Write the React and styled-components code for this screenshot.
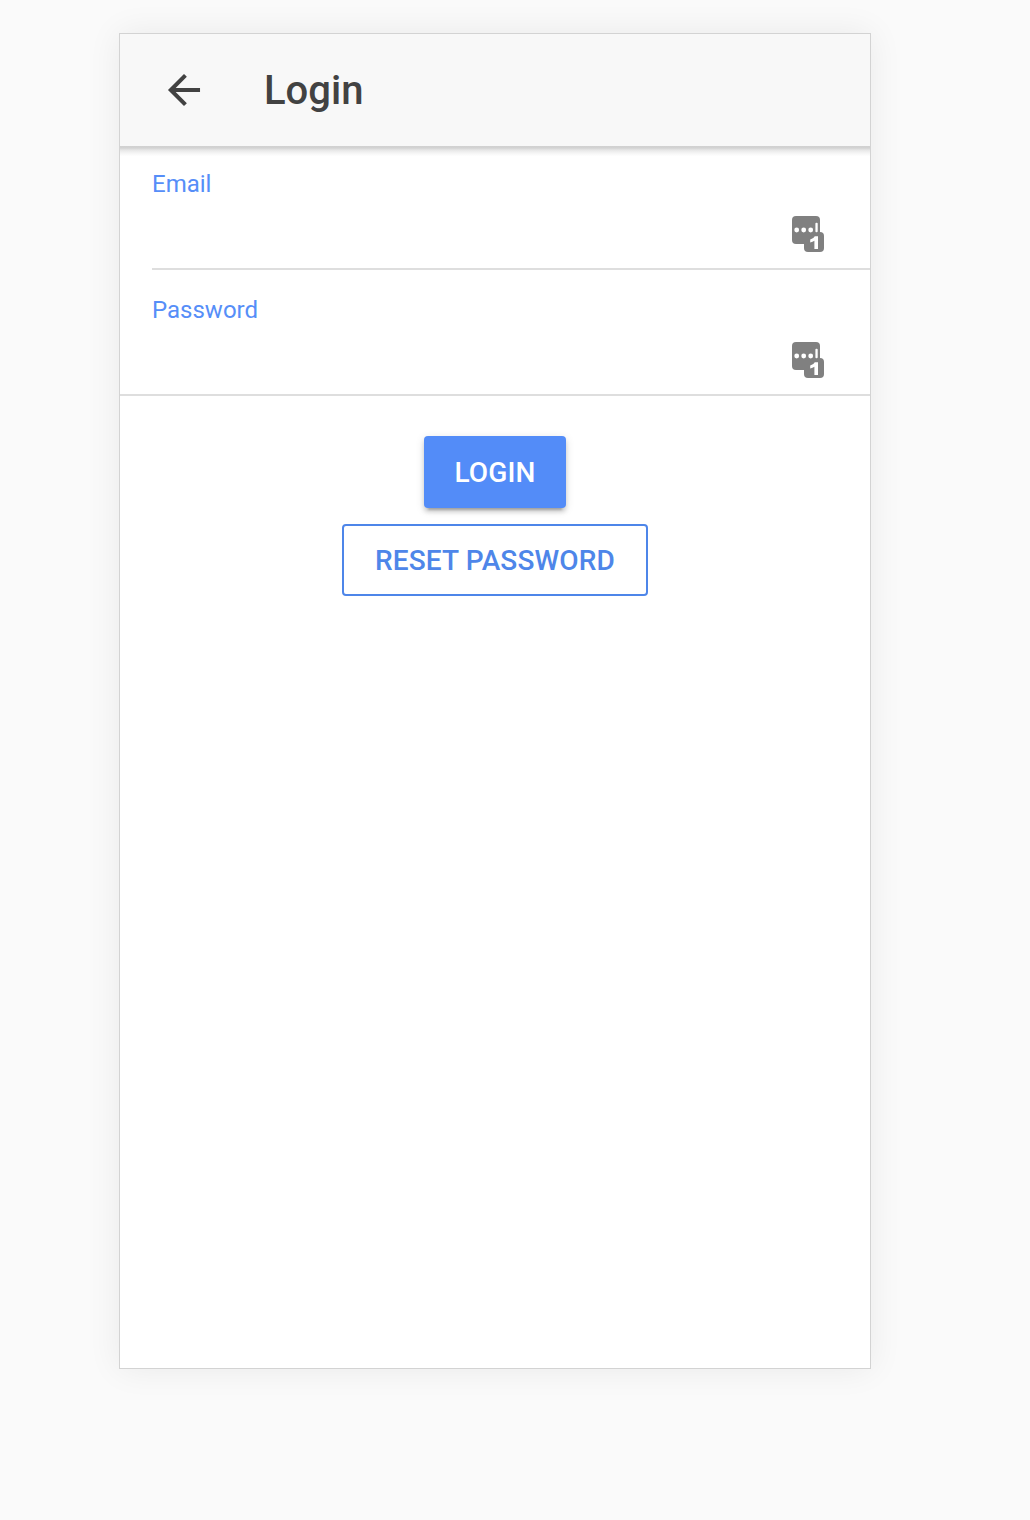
import React from "react";
import styled, { createGlobalStyle } from "styled-components";

const GlobalStyle = createGlobalStyle`
  * { box-sizing: border-box; }
  body {
    margin: 0;
    background: #fafafa;
    font-family: Roboto, "Liberation Sans", sans-serif;
  }
`;

const Page = styled.main`
  min-height: 1520px;
  padding: 33px 0 0 119px;
`;

const Device = styled.div`
  width: 752px;
  height: 1336px;
  background: #fff;
  border: 1px solid #d3d3d3;
  box-shadow: 0 0 32px rgba(0, 0, 0, 0.07);
`;

const Toolbar = styled.header`
  display: flex;
  align-items: center;
  height: 112px;
  padding-left: 40px;
  background: #f8f8f8;
  color: #424242;
`;

const BackButton = styled.button`
  display: flex;
  padding: 0;
  border: 0;
  background: none;
  color: inherit;
`;

const Title = styled.h1`
  margin: 0 0 0 56px;
  padding-top: 2px;
  font-size: 40px;
  line-height: 48px;
  font-weight: 500;
`;

const ToolbarShadow = styled.div`
  height: 10px;
  background: linear-gradient(
    #d1d1d1 0, #d3d3d3 2px, #dddddd 3px, #e6e6e6 4px,
    #f0f0f0 6px, #f8f8f8 8px, #fefefe 10px
  );
`;

const Form = styled.form`
  display: flex;
  flex-direction: column;
`;

const Field = styled.div`
  display: flex;
  justify-content: space-between;
  height: ${(p) => (p.$first ? 114 : 126)}px;
  margin-left: ${(p) => (p.$inset ? 32 : 0)}px;
  padding: ${(p) => (p.$first ? 14 : 26)}px 46px 0 ${(p) => (p.$inset ? 0 : 32)}px;
  border-bottom: 2px solid #dedede;
`;

const Label = styled.label`
  color: #568ef8;
  font-size: 24px;
  line-height: 28px;
`;

const FieldIcon = styled.svg`
  width: 32px;
  height: 36px;
  margin-top: 46px;
`;

const Actions = styled.div`
  display: flex;
  flex-direction: column;
  align-items: center;
  gap: 16px;
  padding-top: 40px;
`;

const Button = styled.button`
  width: ${(p) => p.$width}px;
  height: 72px;
  padding: 2px 0 0;
  border: ${(p) => (p.$outline ? "2px solid #4e86e9" : "0")};
  border-radius: 4px;
  background: ${(p) => (p.$outline ? "transparent" : "#538cf8")};
  color: ${(p) => (p.$outline ? "#4e86e9" : "#fff")};
  box-shadow: ${(p) =>
    p.$outline
      ? "none"
      : "0 4px 4px 0 rgba(0,0,0,.14), 0 6px 2px -4px rgba(0,0,0,.2), 0 2px 10px 0 rgba(0,0,0,.12)"};
  font: 500 28px/36px Roboto, "Liberation Sans", sans-serif;
  letter-spacing: 0.14px;
  text-transform: uppercase;
`;

const ArrowBack = () => (
  <svg width="48" height="48" viewBox="0 0 512 512" fill="currentColor" aria-hidden="true">
    <path d="M427 234.625H167.296l119.2-119.625L256 85 85 256l171 171 30.496-30.625-119.2-119H427z" />
  </svg>
);

const PasswordManagerIcon = () => (
  <FieldIcon viewBox="0 0 32 36" aria-hidden="true">
    <rect width="28" height="28" rx="4" fill="#808080" />
    <rect x="12" y="16" width="20" height="20" rx="4" fill="#808080" />
    <g fill="#fff">
      <circle cx="4.7" cy="14" r="2.4" />
      <circle cx="11.7" cy="14" r="2.4" />
      <circle cx="18.7" cy="14" r="2.4" />
      <rect x="23.4" y="6.8" width="2.3" height="9.4" rx="1" />
      <path d="M22.8 20.2h3.2V33h-3.6v-8.2q-1.7 1.2-4.2 1.6v-2.8q3.3-.9 4.6-3.4z" />
    </g>
  </FieldIcon>
);

export default function App() {
  return (
    <>
      <GlobalStyle />
      <Page>
        <Device>
          <Toolbar>
            <BackButton aria-label="Back">
              <ArrowBack />
            </BackButton>
            <Title>Login</Title>
          </Toolbar>
          <ToolbarShadow />
          <Form>
            <Field $first $inset>
              <Label>Email</Label>
              <PasswordManagerIcon />
            </Field>
            <Field>
              <Label>Password</Label>
              <PasswordManagerIcon />
            </Field>
            <Actions>
              <Button type="button" $width={142}>Login</Button>
              <Button type="button" $width={306} $outline>Reset password</Button>
            </Actions>
          </Form>
        </Device>
      </Page>
    </>
  );
}
